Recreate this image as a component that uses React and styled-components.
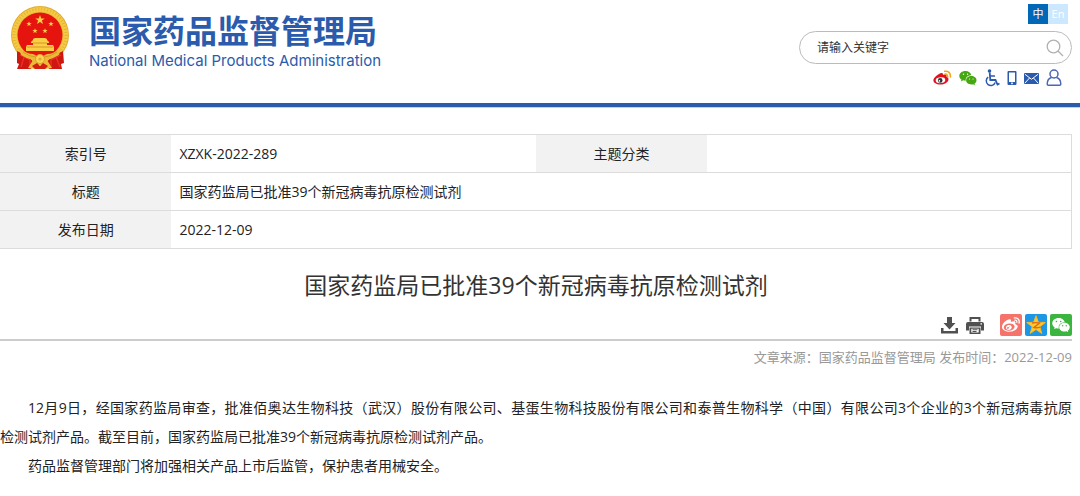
import React from "react";
import styled, { createGlobalStyle } from "styled-components";
import { FaWeibo } from "react-icons/fa";
import { AiFillWechat } from "react-icons/ai";

const GlobalStyle = createGlobalStyle`
  * {
    box-sizing: border-box;
  }

  body {
    margin: 0;
    background: #fff;
    color: #222;
    font-family: "Open Sans", "Noto Sans CJK SC", sans-serif;
    font-size: 14px;
  }
`;

const Header = styled.header`
  display: flex;
  justify-content: space-between;
  align-items: flex-start;
  min-height: 108px;
  padding: 4px 8px 12px 10px;
  border-bottom: 1px solid #bcd3f2;
  box-shadow: inset 0 -4px 0 #2b5bac;
`;

const Brand = styled.a`
  display: flex;
  gap: 18px;
  padding-top: 2px;
  color: #2b5bac;
  text-decoration: none;
`;

const BrandText = styled.div`
  padding-top: 3px;
`;

const BrandName = styled.div`
  font-family: "Noto Sans CJK SC", sans-serif;
  font-size: 32px;
  font-weight: 700;
  line-height: 40px;
`;

const BrandEnglish = styled.div`
  font-family: Inter, sans-serif;
  font-size: 15px;
  line-height: 24px;
`;

const Tools = styled.div`
  display: flex;
  flex-direction: column;
  align-items: flex-end;
  width: 273px;
`;

const Languages = styled.nav`
  display: flex;
  padding-right: 4px;
`;

const Language = styled.a`
  width: 20px;
  height: 20px;
  background: ${props => (props.$active ? "#0068b7" : "#cce8ff")};
  color: #fff;
  font-size: 11px;
  line-height: 20px;
  text-align: center;
  text-decoration: none;
`;

const Search = styled.form`
  display: flex;
  align-items: center;
  width: 100%;
  height: 33px;
  margin-top: 7px;
  padding: 0 7px 0 17px;
  border: 1px solid #bbb;
  border-radius: 17px;
`;

const SearchInput = styled.input`
  flex: 1;
  min-width: 0;
  padding: 0;
  border: 0;
  outline: 0;
  background: none;
  font-family: inherit;
  font-size: 12px;

  &::placeholder {
    color: #333;
    opacity: 1;
  }
`;

const IconButton = styled.button`
  display: flex;
  padding: 0;
  border: 0;
  background: none;
  color: ${props => props.$color || "#505050"};
  cursor: pointer;
`;

const QuickLinks = styled.nav`
  display: flex;
  align-items: center;
  gap: 7px;
  height: 20px;
  margin-top: 4px;
  padding-right: 10px;
`;

const QuickLink = styled.a`
  display: flex;
  color: ${props => props.$color || "#2b5bac"};
`;

const Main = styled.main`
  padding: 26px 8px 20px 0;
`;

const InfoTable = styled.table`
  width: 100%;
  border: 1px solid #dcdcdc;
  border-left: 0;
  border-collapse: collapse;
  table-layout: fixed;
`;

const InfoRow = styled.tr`
  border-bottom: 1px solid #dcdcdc;
`;

const InfoLabel = styled.th`
  width: 16%;
  height: 38px;
  padding: 0;
  background: #f2f2f2;
  font-weight: 400;
  line-height: 20px;
`;

const InfoValue = styled.td`
  padding: 0 8px;
  line-height: 20px;
`;

const Title = styled.h1`
  margin: 19px 0 0;
  color: #333;
  font-size: 23px;
  font-weight: 400;
  line-height: 34px;
  text-align: center;
`;

const Actions = styled.div`
  display: flex;
  justify-content: flex-end;
  align-items: center;
  gap: 8px;
  padding: 12px 0 3px;
  border-bottom: 2px solid #ccc;
`;

const ShareLinks = styled.div`
  display: flex;
  gap: 3px;
  margin-left: 8px;
`;

const ShareLink = styled.a`
  display: flex;
  align-items: center;
  justify-content: center;
  width: 22px;
  height: 22px;
  border-radius: 2px;
  background: ${props => props.$bg};
  color: #fff;
`;

const Meta = styled.p`
  margin: 6px 0 0;
  color: #999;
  font-size: 13px;
  line-height: 20px;
  text-align: right;
`;

const Article = styled.article`
  margin-top: 26px;
`;

const Paragraph = styled.p`
  margin: 0;
  line-height: 29px;
  text-align: justify;
  text-indent: 2em;
`;

const Term = styled.span`
  white-space: nowrap;
`;

const STAR =
  "M0-10 2.5-3.2 9.5-3.1 3.9 1.2 5.9 8.1 0 4 -5.9 8.1 -3.9 1.2 -9.5-3.1 -2.5-3.2Z";

const smallStars = [
  [19, 18],
  [41, 18],
  [25, 25],
  [35, 25]
];

const Emblem = () => (
  <svg width="61" height="64" viewBox="0 0 61 64" aria-hidden="true">
    <circle cx="30" cy="29" r="29" fill="#e3ab30" />
    <circle cx="30" cy="29" r="28" fill="#f3cb45" />
    <circle
      cx="30"
      cy="29"
      r="26"
      fill="none"
      stroke="#e6b336"
      strokeWidth="3"
      strokeDasharray="1 2"
    />
    <circle cx="30" cy="29" r="23.5" fill="#eebb36" />
    <circle cx="30" cy="29" r="22.5" fill="#e5140f" />
    <g fill="#f8cf45">
      <path d={STAR} transform="translate(30 14) scale(.5)" />
      {smallStars.map(([x, y]) => (
        <path
          key={`${x}-${y}`}
          d={STAR}
          transform={`translate(${x} ${y}) scale(.28)`}
        />
      ))}
      <path d="M23 33l2-1h10l2 1v1H23zM21 36l2-2h14l2 2v1h-2v2H23v-2h-2zM17 39h26l1 2v4H16v-4z" />
    </g>
    <path d="M23 37h14M17 41h26" stroke="#cf7b19" strokeWidth=".7" />
    <path
      d="M7 45l12 6 5 6-3 6H7l2-5-2-1zM53 45l-12 6-5 6 3 6h13l-1-5 3-1z"
      fill="#cf1712"
    />
    <path
      d="M10 49l10 5v8M51 49l-10 5v8M14 51l-3 10M46 51l4 10"
      fill="none"
      stroke="#f03025"
      strokeWidth="1.3"
    />
    <path
      d="M9 42q8 6 14 6l4 2 3-2 3 2 4-2q7 0 14-6l-2 7q-7 4-12 5l5 8-7 1-5-4-5 4-7-1 5-8q-6-1-12-5z"
      fill="#edb936"
    />
    <circle cx="30" cy="53" r="4.5" fill="#f8d451" stroke="#dca52c" />
    <circle cx="30" cy="53" r="1.6" fill="#e3ab30" />
    <path d="M22 60l5-3 3 3 3-3 5 3-3 3H25z" fill="#d41d13" />
    <path
      d="M13 46q7 5 13 5M47 46q-7 5-13 5"
      fill="none"
      stroke="#ce9221"
      strokeWidth=".8"
    />
  </svg>
);

const SearchIcon = () => (
  <svg width="18" height="18" viewBox="0 0 18 18" aria-hidden="true">
    <g fill="none" stroke="#b0b0b0" strokeWidth="1.3">
      <circle cx="7.5" cy="7.5" r="6.3" />
      <path d="M12 12l5 5" />
    </g>
  </svg>
);

const WeiboIcon = () => (
  <svg width="19" height="16" viewBox="0 0 19 16" aria-hidden="true">
    <path
      d="M7.5 3.2C9.3 2.5 10.4 3.2 9.9 5c2.2-.8 4.2-.4 3.6 1.7 1.5.5 2.3 1.5 1.9 3.2-.6 2.5-4 4.7-8.1 4.7C3.3 14.6.4 12.8.4 10.3.4 7.8 4.8 4.2 7.5 3.2z"
      fill="#e3101b"
    />
    <ellipse
      cx="7.5"
      cy="10.2"
      rx="4.8"
      ry="2.9"
      fill="#fff"
      transform="rotate(-6 7.5 10.2)"
    />
    <circle cx="7.2" cy="10.4" r="2.3" fill="#333" />
    <circle cx="6.4" cy="10.9" r=".8" fill="#fff" />
    <path
      d="M12 4q2.5-.5 2.7 2.7M11.7 1.3q5.8-.7 5.8 5.7"
      fill="none"
      stroke="#f5a51b"
      strokeWidth="1.5"
      strokeLinecap="round"
    />
  </svg>
);

const WechatIcon = () => (
  <svg width="18" height="16" viewBox="0 0 18 16" aria-hidden="true">
    <path
      d="M6.5 1C2.9 1 .3 3.2.3 5.9c0 1.5.9 2.8 2.2 3.7L2 11.5l2.2-1.2c.8.2 1.6.4 2.6.3-.6-3 2-5.3 5.5-5.3C11.800 2.800 9.500 1 6.500 1z"
      fill="#45a811"
    />
    <path
      d="M12.3 6.1c-3 0-5.2 1.9-5.2 4.2 0 2.4 2.3 4.2 5.2 4.2.6 0 1.2-.1 1.8-.3l1.9 1-.5-1.6c1.2-.8 2-1.9 2-3.3 0-2.3-2.3-4.2-5.2-4.2z"
      fill="#45a811"
    />
    <g fill="#fff">
      <circle cx="4.5" cy="4.3" r=".7" />
      <circle cx="8.6" cy="4.3" r=".7" />
      <circle cx="10.6" cy="9" r=".6" />
      <circle cx="14" cy="9" r=".6" />
    </g>
  </svg>
);

const WheelchairIcon = () => (
  <svg width="16" height="18" viewBox="0 0 16 18" aria-hidden="true">
    <circle cx="5.5" cy="2" r="1.8" fill="currentColor" />
    <g fill="none" stroke="currentColor">
      <path d="M5.7 3.5l.6 7.5h5.2l2 4.5 2-1" strokeWidth="1.8" />
      <path d="M6 7h5" strokeWidth="1.5" />
      <path d="M4.2 8.2a4.6 4.6 0 1 0 7 5.3" strokeWidth="1.5" />
    </g>
  </svg>
);

const PhoneIcon = () => (
  <svg width="10" height="16" viewBox="0 0 10 16" aria-hidden="true">
    <path
      d="M1.5 1h7q1 0 1 1v12q0 1-1 1h-7q-1 0-1-1V2q0-1 1-1zm.5 1.5v9.5h6v-9.5zm3 10a.9.9 0 1 0 .01 0z"
      fill="currentColor"
      fillRule="evenodd"
    />
  </svg>
);

const MailIcon = () => (
  <svg width="15" height="11" viewBox="0 0 15 11" aria-hidden="true">
    <rect width="15" height="11" rx="1" fill="currentColor" />
    <path
      d="M1 1.3l6.5 5 6.5-5M1 10l4.5-5M14 10L9.5 5"
      fill="none"
      stroke="#fff"
    />
  </svg>
);

const UserIcon = () => (
  <svg width="16" height="18" viewBox="0 0 16 18" aria-hidden="true">
    <g fill="none" stroke="currentColor" strokeWidth="1.5">
      <circle cx="8" cy="5" r="4" />
      <path d="M5.5 8.5C2.5 9.5 1.2 12 1.2 15q0 1.3 1.3 1.3h11q1.3 0 1.3-1.3c0-3-1.3-5.5-4.3-6.5" />
    </g>
  </svg>
);

const DownloadIcon = () => (
  <svg width="17" height="17" viewBox="0 0 17 17" aria-hidden="true">
    <path
      d="M6 0h5v6h3.5l-6 6.5L2.5 6H6zM0 11h2.5v3h12v-3H17v5.5H0z"
      fill="currentColor"
    />
  </svg>
);

const PrintIcon = () => (
  <svg width="18" height="17" viewBox="0 0 18 17" aria-hidden="true">
    <path
      d="M3.5 0h11v4.5h-2V2h-7v2.5h-2zM2 5h14q2 0 2 2v6.5h-3V9.5H3v4H0V7q0-2 2-2zm12.5 1.3v1.2H16V6.3zM3.5 10.5h11V17h-11zm1.8 1.3v3.7h7.4v-3.7zM6.5 12.2h5v1h-5zm0 1.8h4v1h-4z"
      fill="currentColor"
      fillRule="evenodd"
    />
  </svg>
);

const QzoneIcon = () => (
  <svg width="20" height="20" viewBox="0 0 20 20" aria-hidden="true">
    <path
      d={STAR}
      transform="translate(10 10.5) scale(.98)"
      fill="#fdc92e"
      stroke="#f9b71f"
      strokeWidth="1"
      strokeLinejoin="round"
    />
    <path
      d="M6 8q4-.8 7.500 0L8 12.500q3 .7 6.500-.3"
      fill="none"
      stroke="#df6f12"
      strokeWidth="1.4"
    />
  </svg>
);

export default function App() {
  return (
    <>
      <GlobalStyle />
      <Header>
        <Brand href="#">
          <Emblem />
          <BrandText>
            <BrandName>国家药品监督管理局</BrandName>
            <BrandEnglish>National Medical Products Administration</BrandEnglish>
          </BrandText>
        </Brand>
        <Tools>
          <Languages>
            <Language href="#" $active>
              中
            </Language>
            <Language href="#">En</Language>
          </Languages>
          <Search onSubmit={e => e.preventDefault()}>
            <SearchInput
              type="text"
              aria-label="请输入关键字"
              placeholder="请输入关键字"
            />
            <IconButton type="submit" aria-label="搜索">
              <SearchIcon />
            </IconButton>
          </Search>
          <QuickLinks>
            <QuickLink href="#" aria-label="微博">
              <WeiboIcon />
            </QuickLink>
            <QuickLink href="#" aria-label="微信">
              <WechatIcon />
            </QuickLink>
            <QuickLink href="#" aria-label="无障碍">
              <WheelchairIcon />
            </QuickLink>
            <QuickLink href="#" aria-label="手机版">
              <PhoneIcon />
            </QuickLink>
            <QuickLink href="#" aria-label="邮箱">
              <MailIcon />
            </QuickLink>
            <QuickLink href="#" aria-label="个人中心" $color="#4a66b5">
              <UserIcon />
            </QuickLink>
          </QuickLinks>
        </Tools>
      </Header>
      <Main>
        <InfoTable>
          <colgroup>
            <col width="16%" />
            <col width="34%" />
            <col width="16%" />
            <col width="34%" />
          </colgroup>
          <tbody>
            <InfoRow>
              <InfoLabel scope="row">索引号</InfoLabel>
              <InfoValue>XZXK-2022-289</InfoValue>
              <InfoLabel scope="row">主题分类</InfoLabel>
              <InfoValue />
            </InfoRow>
            <InfoRow>
              <InfoLabel scope="row">标题</InfoLabel>
              <InfoValue colSpan={3}>
                国家药监局已批准39个新冠病毒抗原检测试剂
              </InfoValue>
            </InfoRow>
            <InfoRow>
              <InfoLabel scope="row">发布日期</InfoLabel>
              <InfoValue colSpan={3}>2022-12-09</InfoValue>
            </InfoRow>
          </tbody>
        </InfoTable>
        <Title>国家药监局已批准39个新冠病毒抗原检测试剂</Title>
        <Actions>
          <IconButton type="button" aria-label="下载">
            <DownloadIcon />
          </IconButton>
          <IconButton type="button" aria-label="打印">
            <PrintIcon />
          </IconButton>
          <ShareLinks>
            <ShareLink href="#" aria-label="分享到微博" $bg="#f5736a">
              <FaWeibo size={18} />
            </ShareLink>
            <ShareLink href="#" aria-label="分享到QQ空间" $bg="#1e96e6">
              <QzoneIcon />
            </ShareLink>
            <ShareLink href="#" aria-label="分享到微信" $bg="#3bb53f">
              <AiFillWechat size={20} />
            </ShareLink>
          </ShareLinks>
        </Actions>
        <Meta>文章来源：国家药品监督管理局 发布时间：2022-12-09</Meta>
        <Article>
          <Paragraph>
            12月9日，经国家药监局审查，批准佰奥达生物科技（武汉）股份有限公司、基蛋生物科技股份有限公司和泰普生物科学（中国）有限公司3个企业的3个新冠病毒抗原
            <Term>检测试剂</Term>
            产品。截至目前，国家药监局已批准39个新冠病毒抗原检测试剂产品。
          </Paragraph>
          <Paragraph>
            药品监督管理部门将加强相关产品上市后监管，保护患者用械安全。
          </Paragraph>
        </Article>
      </Main>
    </>
  );
}
